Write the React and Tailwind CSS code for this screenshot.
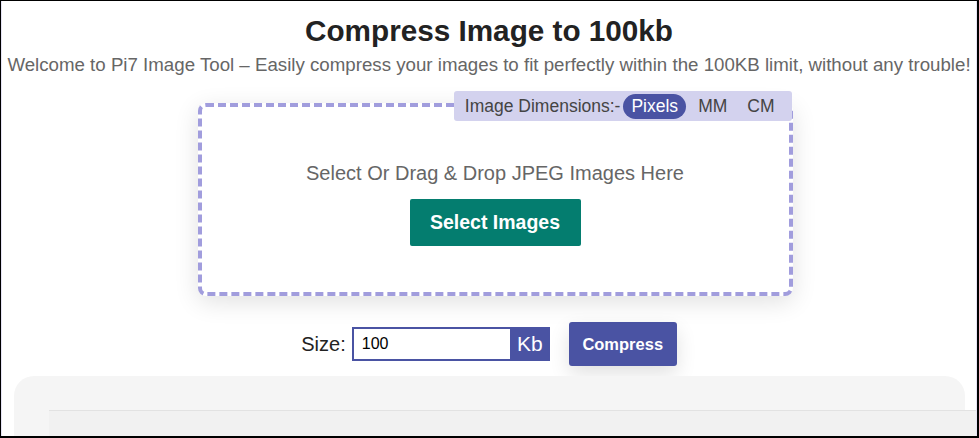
export default function App() {
  return (
    <div className="h-[438px] w-[979px] overflow-hidden border-t border-l border-b-2 border-r-2 border-black bg-white font-['Liberation_Sans',Arial,sans-serif]">
      <div className="flex h-full border-l border-r border-[#e6e4f5]">
        <div className="flex flex-1 flex-col items-center">
          <h1 className="mt-[11px] shrink-0 text-[29.7px] font-bold leading-[38px] text-[#222]">Compress Image to 100kb</h1>
          <p className="mt-[3px] shrink-0 whitespace-nowrap text-[18.7px] leading-[23px] text-[#666]">
            Welcome to Pi7 Image Tool – Easily compress your images to fit perfectly within the 100KB limit, without any trouble!
          </p>

          <div className="relative mt-[27px] ml-[12px] flex h-[193px] w-[595px] shrink-0 flex-col items-center rounded-[8px] border-4 border-dashed border-[#a19ddd] bg-white shadow-[0_6px_24px_rgba(0,0,0,0.12)]">
            <div className="absolute -top-[16px] -right-[3px] flex h-[30px] items-center rounded-[3px] bg-[#d3d2ee] pl-[11px] pr-[17px] text-[17.5px] text-[#444]">
              <span>Image Dimensions:-</span>
              <span className="ml-[3px] rounded-full bg-[#4a53a3] px-[8px] leading-[25px] text-white">Pixels</span>
              <span className="ml-[12px]">MM</span>
              <span className="ml-[20px]">CM</span>
            </div>
            <p className="mt-[54px] text-[20px] leading-[24px] text-[#666]">Select Or Drag &amp; Drop JPEG Images Here</p>
            <button className="mt-[14px] h-[47px] w-[171px] rounded-[2px] bg-[#047d6f] text-[19.5px] font-bold text-white">
              Select Images
            </button>
          </div>

          <div className="mt-[26px] flex shrink-0 items-center">
            <span className="text-[20px] text-[#222]">Size:</span>
            <div className="ml-[6px] flex items-center">
              <input
                defaultValue="100"
                className="h-[34px] w-[163px] border-2 border-[#4a53a3] bg-white px-[8px] text-[16px] text-black outline-none"
              />
              <span className="-ml-[5px] flex h-[34px] w-[40px] items-center justify-center bg-[#4a53a3] text-[21px] text-white">Kb</span>
            </div>
            <button className="ml-[19px] h-[44px] w-[108px] rounded-[3px] bg-[#4a53a3] text-[16.5px] font-bold text-white shadow-[0_8px_20px_rgba(0,0,0,0.12)]">
              Compress
            </button>
          </div>

          <div className="mt-[10px] flex h-[80px] w-[951px] shrink-0 flex-col rounded-t-[20px] bg-[#f5f5f5]">
            <div className="ml-[35px] mr-[-11px] mt-[34px] flex-1 border-t border-[#e2e2e2] bg-[#f1f1f1]" />
          </div>
        </div>
      </div>
    </div>
  );
}
